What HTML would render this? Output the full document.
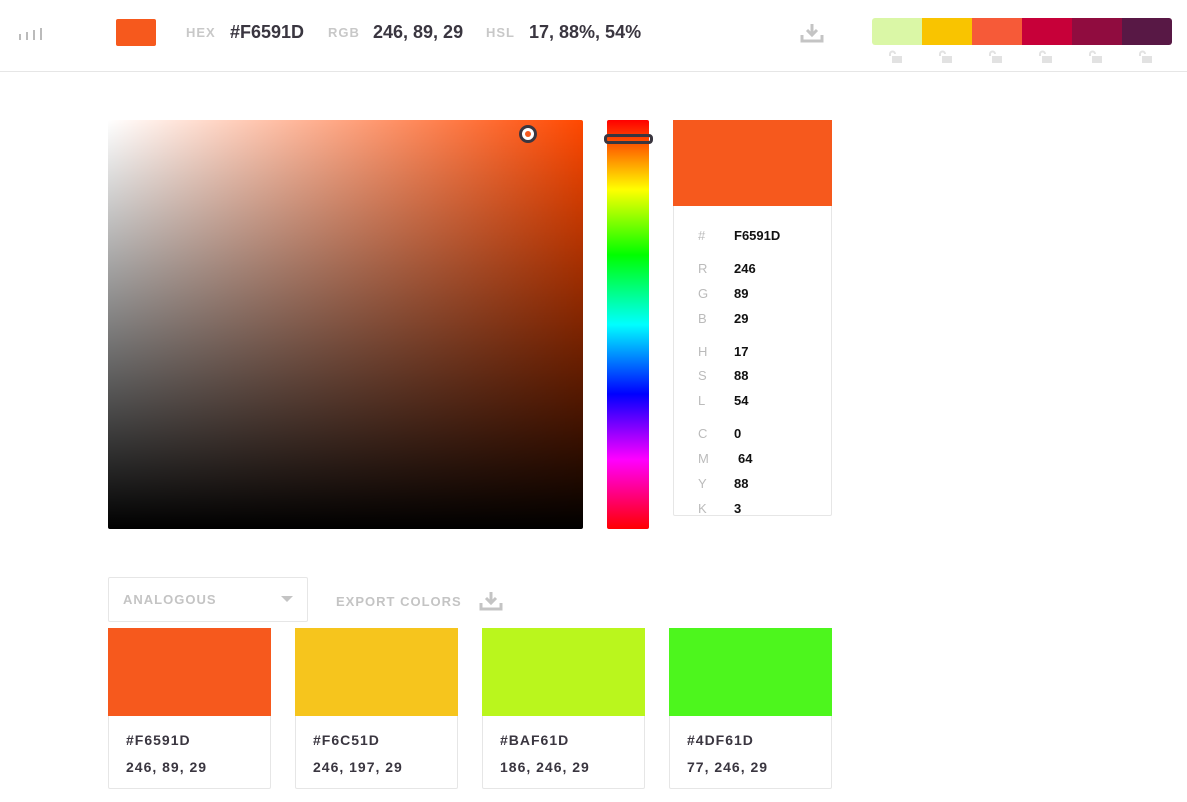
<!DOCTYPE html>
<html><head><meta charset="utf-8"><style>
*{margin:0;padding:0;box-sizing:border-box}
body{width:1187px;height:802px;background:#fff;font-family:"Liberation Sans",sans-serif;position:relative;overflow:hidden;color:#333}
.a{position:absolute}
.lbl{color:#c8c8c8;font-size:13px;font-weight:bold;letter-spacing:1px}
.val{color:#3a3640;font-size:18px;font-weight:bold}
.il{position:absolute;left:698px;color:#bbb;font-size:13px}
.iv{position:absolute;left:734px;color:#111;font-size:13px;font-weight:bold}
.card{position:absolute;top:628px;width:163px;height:161px;border:1px solid #e6e6e6;border-radius:2px;background:#fff}
.card .c{height:88px;margin:-1px -1px 0 -1px}
.card .h{position:absolute;left:17px;top:103px;font-size:14px;font-weight:bold;color:#3a3640;letter-spacing:1px}
.card .r{position:absolute;left:17px;top:130px;font-size:14px;font-weight:bold;color:#3a3640;letter-spacing:1px}
</style></head><body>
<div class="a" style="left:0;top:71px;width:1187px;height:1px;background:#e6e6e6"></div>
<svg class="a" style="left:18px;top:27px" width="28" height="14"><g fill="#bbb"><rect x="1" y="7" width="2" height="6"/><rect x="8" y="5" width="2" height="8"/><rect x="15" y="3" width="2" height="10"/><rect x="22" y="1" width="2" height="12"/></g></svg>
<div class="a" style="left:116px;top:19px;width:40px;height:27px;background:#F6591D;border-radius:2px"></div>
<div class="a lbl" style="left:186px;top:25px">HEX</div>
<div class="a val" style="left:230px;top:22px">#F6591D</div>
<div class="a lbl" style="left:328px;top:25px">RGB</div>
<div class="a val" style="left:373px;top:22px">246, 89, 29</div>
<div class="a lbl" style="left:486px;top:25px">HSL</div>
<div class="a val" style="left:529px;top:22px">17, 88%, 54%</div>
<svg class="a" style="left:800px;top:22px" width="24" height="22"><path d="M12 2v11M7 8l5 5 5-5" stroke="#c4c4c4" stroke-width="3" fill="none"/><path d="M2 13v6h20v-6" stroke="#c4c4c4" stroke-width="3" fill="none"/></svg>
<div class="a" style="left:872px;top:18px;width:300px;height:27px;border-radius:3px;overflow:hidden;display:flex">
<div style="flex:1;background:#DAF7A6"></div><div style="flex:1;background:#F9C400"></div><div style="flex:1;background:#F65A38"></div><div style="flex:1;background:#C70039"></div><div style="flex:1;background:#900C3F"></div><div style="flex:1;background:#581845"></div></div>
<svg class="a" style="left:872px;top:50px" width="300" height="14"><g fill="#e2e2e2" stroke="#e2e2e2">
<g id="l"><rect x="20" y="6" width="10" height="7" stroke="none"/><path d="M18 6v-2a2.5 2.5 0 0 1 5 0" fill="none" stroke-width="2"/></g>
<use href="#l" x="50"/><use href="#l" x="100"/><use href="#l" x="150"/><use href="#l" x="200"/><use href="#l" x="250"/></g></svg>

<div class="a" style="left:108px;top:120px;width:475px;height:409px;border-radius:2px;background:linear-gradient(to bottom,rgba(0,0,0,0),#000),linear-gradient(to right,#fff,rgb(255,72,0))"></div>
<div class="a" style="left:519px;top:125px;width:18px;height:18px;border-radius:50%;border:3px solid #3a3640;background:#fff"></div>
<div class="a" style="left:525px;top:131px;width:6px;height:6px;border-radius:50%;background:#F6591D"></div>

<div class="a" style="left:607px;top:120px;width:42px;height:409px;border-radius:2px;background:linear-gradient(to bottom,#f00 0%,#ff0 17%,#0f0 33%,#0ff 50%,#00f 67%,#f0f 83%,#f00 100%)"></div>
<div class="a" style="left:604px;top:134px;width:49px;height:10px;border:3px solid #3a3640;border-radius:4px"></div>

<div class="a" style="left:673px;top:120px;width:159px;height:396px;border:1px solid #e6e6e6;border-radius:2px"></div>
<div class="a" style="left:673px;top:120px;width:159px;height:86px;background:#F6591D"></div>
<div class="il" style="top:228px">#</div><div class="iv" style="top:228px">F6591D</div>
<div class="il" style="top:261px">R</div><div class="iv" style="top:261px">246</div>
<div class="il" style="top:286px">G</div><div class="iv" style="top:286px">89</div>
<div class="il" style="top:311px">B</div><div class="iv" style="top:311px">29</div>
<div class="il" style="top:344px">H</div><div class="iv" style="top:344px">17</div>
<div class="il" style="top:368px">S</div><div class="iv" style="top:368px">88</div>
<div class="il" style="top:393px">L</div><div class="iv" style="top:393px">54</div>
<div class="il" style="top:426px">C</div><div class="iv" style="top:426px">0</div>
<div class="il" style="top:451px">M</div><div class="iv" style="top:451px;left:738px">64</div>
<div class="il" style="top:476px">Y</div><div class="iv" style="top:476px">88</div>
<div class="il" style="top:501px;height:14px;overflow:hidden">K</div><div class="iv" style="top:501px;height:14px;overflow:hidden">3</div>

<div class="a" style="left:108px;top:577px;width:200px;height:45px;border:1px solid #e6e6e6;border-radius:2px"></div>
<div class="a lbl" style="left:123px;top:592px;color:#c4c4c4">ANALOGOUS</div>
<div class="a" style="left:281px;top:596px;width:0;height:0;border-left:6px solid transparent;border-right:6px solid transparent;border-top:6px solid #c4c4c4"></div>
<div class="a lbl" style="left:336px;top:594px;color:#c4c4c4">EXPORT COLORS</div>
<svg class="a" style="left:479px;top:590px" width="24" height="22"><path d="M12 2v11M7 8l5 5 5-5" stroke="#c4c4c4" stroke-width="3" fill="none"/><path d="M2 13v6h20v-6" stroke="#c4c4c4" stroke-width="3" fill="none"/></svg>

<div class="card" style="left:108px"><div class="c" style="background:#F6591D"></div><div class="h">#F6591D</div><div class="r">246, 89, 29</div></div>
<div class="card" style="left:295px"><div class="c" style="background:#F6C51D"></div><div class="h">#F6C51D</div><div class="r">246, 197, 29</div></div>
<div class="card" style="left:482px"><div class="c" style="background:#BAF61D"></div><div class="h">#BAF61D</div><div class="r">186, 246, 29</div></div>
<div class="card" style="left:669px"><div class="c" style="background:#4DF61D"></div><div class="h">#4DF61D</div><div class="r">77, 246, 29</div></div>
</body></html>
